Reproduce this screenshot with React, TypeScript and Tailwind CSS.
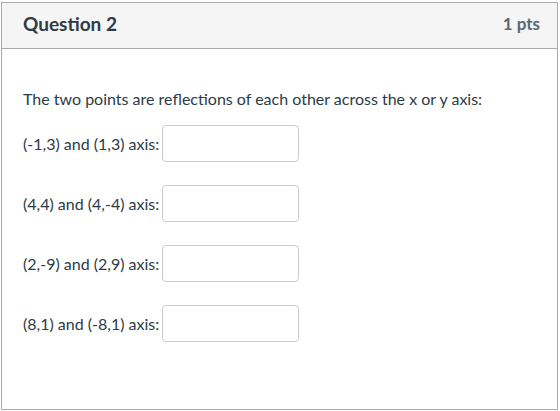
import React from 'react';

const rows = [
  '(-1,3) and (1,3) axis:',
  '(4,4) and (4,-4) axis:',
  '(2,-9) and (2,9) axis:',
  '(8,1) and (-8,1) axis:',
];

export default function App() {
  return (
    <div className="w-[560px] h-[411px] bg-white pt-[2px] pl-[1px]" style={{ fontFamily: 'Lato, "Open Sans", sans-serif' }}>
      <div className="w-[557px] h-[408px] border border-[#aaaaaa] flex flex-col">
        <div className="h-[46px] bg-[#f5f5f5] border-b border-[#aaaaaa] flex items-center justify-between pl-[21px] pr-[17px] pb-[3px]">
          <h2 className="text-[19px] font-bold text-[#2d3b45]">Question 2</h2>
          <span className="text-[17px] font-bold text-[#5b6670]">1 pts</span>
        </div>
        <div className="pl-[21px] pt-[39px] text-[#2d3b45] text-[16px]">
          <p className="leading-[22px]">The two points are reflections of each other across the x or y axis:</p>
          <div className="flex flex-col gap-[23px] mt-[15px]">
            {rows.map((r) => (
              <div key={r} className="flex items-center">
                <span className="mr-[3px]">{r}</span>
                <input className="w-[137px] h-[37px] border border-[#c7cdd1] rounded-[4px] bg-white" />
              </div>
            ))}
          </div>
        </div>
      </div>
    </div>
  );
}
